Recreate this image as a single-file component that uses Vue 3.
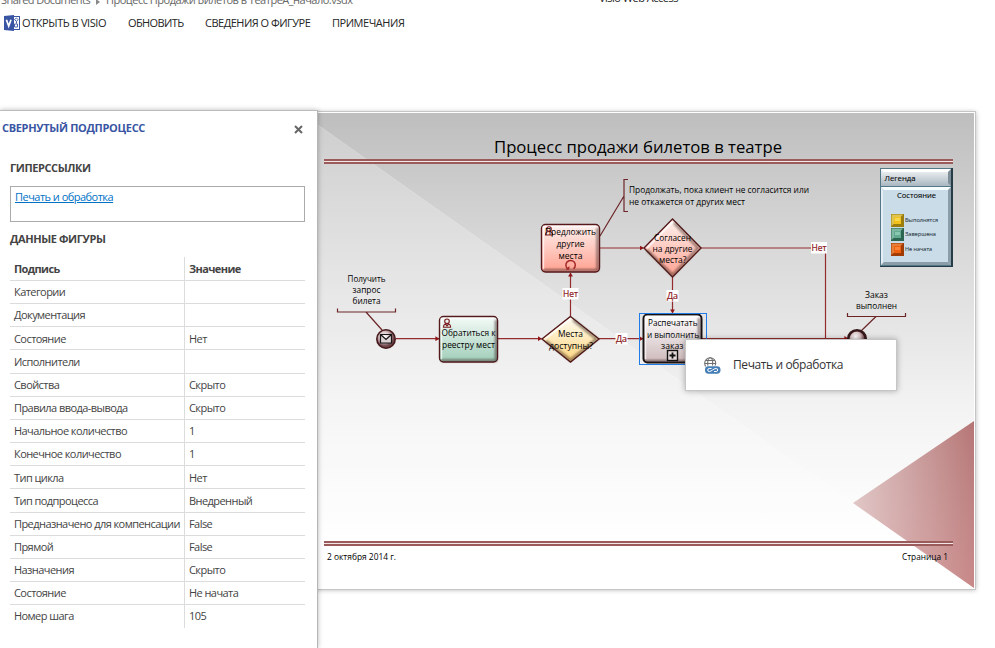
<script setup>
const commands = [
  { text: 'ОТКРЫТЬ В VISIO', cls: 'c1' },
  { text: 'ОБНОВИТЬ', cls: 'c2' },
  { text: 'СВЕДЕНИЯ О ФИГУРЕ', cls: 'c3' },
  { text: 'ПРИМЕЧАНИЯ', cls: 'c4' },
]
const rows = [
  ['Категории', ''],
  ['Документация', ''],
  ['Состояние', 'Нет'],
  ['Исполнители', ''],
  ['Свойства', 'Скрыто'],
  ['Правила ввода-вывода', 'Скрыто'],
  ['Начальное количество', '1'],
  ['Конечное количество', '1'],
  ['Тип цикла', 'Нет'],
  ['Тип подпроцесса', 'Внедренный'],
  ['Предназначено для компенсации', 'False'],
  ['Прямой', 'False'],
  ['Назначения', 'Скрыто'],
  ['Состояние', 'Не начата'],
  ['Номер шага', '105'],
]
// Diagram captions: text, left x, baseline y, width
const labels = [
  ['Получить', 347.5, 281.5, 38],
  ['запрос', 352.5, 293, 28],
  ['билета', 352.5, 304, 28],
  ['Обратиться к', 441.5, 336, 54],
  ['реестру мест', 442, 348, 53],
  ['Предложить', 545, 235, 51],
  ['другие', 556.5, 247, 28],
  ['места', 558.5, 258.5, 24],
  ['Места', 558, 336.5, 25],
  ['доступны?', 549, 348.5, 44],
  ['Согласен', 654, 240.5, 37],
  ['на другие', 652.5, 251.5, 40],
  ['места?', 659, 263, 27.5],
  ['Распечатать', 648, 326, 49.5],
  ['и выполнить', 647, 338, 52],
  ['заказ', 661, 349, 22.5],
  ['Заказ', 865, 298, 23],
  ['выполнен', 856, 309, 41],
  ['Продолжать, пока клиент не согласится или', 629, 193, 180],
  ['не откажется от других мест', 629, 205, 116],
]
const flowLabels = [
  ['Нет', 563, 297, 15],
  ['Да', 616, 342, 11],
  ['Да', 667, 299, 11],
  ['Нет', 811.5, 251, 15],
]
const legend = [
  { text: 'Выполнятся', y: 214, w: 33, fill: '#f2c21b', light: '#fbe36f', dark: '#9b7d10' },
  { text: 'Завершена', y: 228, w: 31, fill: '#63ab90', light: '#a3dcc5', dark: '#2d6650' },
  { text: 'Не начата', y: 243, w: 27, fill: '#f0610f', light: '#ff9a52', dark: '#a03d05' },
]
</script>

<template>
  <div class="screen">
    <header class="top">
      <div class="crumbs">
        <span class="crumb-root">Shared Documents</span>
        <svg class="crumb-arrow" width="4" height="6" viewBox="0 0 4 6"><path d="M0 0L4 3L0 6Z" fill="#888" /></svg>
        <span class="crumb-file">Процесс Продажи Билетов в ТеатреA_начало.vsdx</span>
        <span class="app-title">Visio Web Access</span>
      </div>
      <nav class="commands">
        <svg class="visio" width="16" height="16" viewBox="0 0 16 16">
          <rect x="8.5" y="1.5" width="7" height="13" fill="#fff" stroke="#3955a3" />
          <path d="M0 1L10 0V16L0 15Z" fill="#3955a3" />
          <path d="M2.400 4.800L4.700 11L7 4.800" fill="none" stroke="#fff" stroke-width="1.7" />
          <path d="M10.500 4.500L12.500 3L14 4.500L12.500 6.500ZM12.500 6.500V8.500M10.500 9h3v3h-3z" fill="none" stroke="#3955a3" stroke-width=".9" />
        </svg>
        <span v-for="c in commands" :key="c.text" :class="c.cls">{{ c.text }}</span>
      </nav>
    </header>

    <main class="work">
      <aside class="panel">
        <div class="panel-head">
          <h2>СВЕРНУТЫЙ ПОДПРОЦЕСС</h2>
          <svg width="9" height="9" viewBox="0 0 9 9"><path d="M1 1L8 8M8 1L1 8" stroke="#666" stroke-width="2" /></svg>
        </div>
        <h3 class="h-links">ГИПЕРССЫЛКИ</h3>
        <div class="links"><a>Печать и обработка</a></div>
        <h3 class="h-data">ДАННЫЕ ФИГУРЫ</h3>
        <div class="table">
          <div class="row head"><span>Подпись</span><span>Значение</span></div>
          <div v-for="(r, i) in rows" :key="i" class="row"><span>{{ r[0] }}</span><span>{{ r[1] }}</span></div>
        </div>
      </aside>

      <section class="canvas">
        <svg class="drawing" width="677" height="548" viewBox="318 100 677 548">
          <defs>
            <linearGradient id="bg" x1="0" y1="0" x2="0" y2="1">
              <stop offset="0" stop-color="#bebebe" /><stop offset=".3" stop-color="#dadada" />
              <stop offset=".62" stop-color="#f3f3f3" /><stop offset=".9" stop-color="#fff" />
            </linearGradient>
            <linearGradient id="tri"><stop offset="0" stop-color="#ddc3c3" /><stop offset="1" stop-color="#b67575" /></linearGradient>
            <linearGradient id="triFade" x1="0" y1="0" x2="0" y2="1"><stop offset="0" stop-color="#fff" stop-opacity="0" /><stop offset="1" stop-color="#ffc0c0" stop-opacity=".25" /></linearGradient>
            <linearGradient id="red" x1="0" y1="0" x2="0" y2="1"><stop offset="0" stop-color="#fff2ef" /><stop offset="1" stop-color="#ffa191" /></linearGradient>
            <linearGradient id="green" x1="0" y1="0" x2="0" y2="1"><stop offset="0" stop-color="#f5fbf8" /><stop offset="1" stop-color="#9fcdb8" /></linearGradient>
            <linearGradient id="yellow" x1="0" y1="0" x2="0" y2="1"><stop offset="0" stop-color="#fffdf5" /><stop offset="1" stop-color="#fdd47d" /></linearGradient>
            <linearGradient id="mauve" x1="0" y1="0" x2="0" y2="1"><stop offset="0" stop-color="#fff" /><stop offset="1" stop-color="#cdb9bb" /></linearGradient>
            <linearGradient id="lgHead" x1="0" y1="0" x2="0" y2="1"><stop offset="0" stop-color="#f5f7f8" /><stop offset="1" stop-color="#a9b7c0" /></linearGradient>
            <radialGradient id="ball" cx=".42" cy=".38"><stop offset="0" stop-color="#fff" /><stop offset=".55" stop-color="#d8c3c6" /><stop offset="1" stop-color="#6f474b" /></radialGradient>
            <filter id="soft" x="-10%" y="-10%" width="120%" height="120%"><feGaussianBlur stdDeviation="2.5" /></filter>
            <filter id="edge" x="-20%" y="-20%" width="140%" height="140%"><feGaussianBlur stdDeviation=".8" /></filter>
            <marker id="arr" viewBox="0 0 5 6" refX="4.5" refY="3" markerWidth="4" markerHeight="5" markerUnits="userSpaceOnUse" orient="auto"><path d="M0 0L5 3L0 6Z" fill="#8e1518" /></marker>
          </defs>

          <rect x="300" y="112" width="676" height="478" fill="#000" opacity=".28" filter="url(#soft)" />
          <rect x="300" y="111" width="676" height="479" fill="#c5c5c5" />
          <rect x="300" y="112" width="675" height="477" fill="#fff" />
          <rect x="300" y="113" width="674" height="475" fill="url(#bg)" />
          <path d="M318 125L853 503L730 588H318Z" fill="#fff" opacity=".23" />
          <path d="M318 125L853 503" stroke="#fff" opacity=".18" />
          <path d="M974 421V588L853 503Z" fill="url(#tri)" />
          <path d="M974 421V588L853 503Z" fill="url(#triFade)" />
          <g fill="#9b5b5b">
            <rect x="324" y="159" width="629" height="2" /><rect x="324" y="162" width="629" height="2" />
            <rect x="324" y="541" width="629" height="2" /><rect x="324" y="544" width="629" height="2" />
          </g>
          <g fill="#f2e6e6"><rect x="324" y="161" width="629" height="1" /><rect x="324" y="543" width="629" height="1" /></g>
          <text class="title" x="494" y="153" textLength="288" lengthAdjust="spacingAndGlyphs">Процесс продажи билетов в театре</text>
          <text class="foot" x="327" y="560" textLength="69" lengthAdjust="spacingAndGlyphs">2 октября 2014 г.</text>
          <text class="foot" x="902" y="560" textLength="46" lengthAdjust="spacingAndGlyphs">Страница 1</text>

          <!-- connectors -->
          <g fill="none" stroke="#942c2f" stroke-width="1.2">
            <path d="M396 338.700H439" marker-end="url(#arr)" />
            <path d="M498 338.700H541.500" marker-end="url(#arr)" />
            <path d="M570.500 317V273" marker-end="url(#arr)" />
            <path d="M600 248H643.500" marker-end="url(#arr)" />
            <path d="M672.500 277V313" marker-end="url(#arr)" />
            <path d="M599 338.700H643" marker-end="url(#arr)" />
            <path d="M701 248H822" />
            <path d="M825.500 253V338.500" />
            <path d="M702 338.500H848" marker-end="url(#arr)" />
          </g>
          <g fill="none" stroke="#6c2628" stroke-width="1.2">
            <path d="M337.500 308.500V312H395.500V308.500M366 312L382 330" />
            <path d="M847.500 313V316.500H905.500V313M876 316.500L861 331" />
            <path d="M628 179.500H624V211.500H628M624 196L600 236" />
          </g>

          <!-- tasks -->
          <g stroke="#56191c" stroke-width="1.4">
            <rect x="541.5" y="224.5" width="58" height="47.5" rx="4" fill="url(#red)" />
            <rect x="439.5" y="316.5" width="58" height="45.5" rx="4" fill="url(#green)" />
            <rect x="643.5" y="314.5" width="58" height="48" rx="4" fill="url(#mauve)" stroke="#171112" stroke-width="2" />
          </g>
          <g fill="none" stroke-width="2.2" stroke="#321d1d" opacity=".6" filter="url(#edge)">
            <path d="M543 270H597.500V228" /><path d="M441 360.500H496V320" /><path d="M645 361H699V318" />
          </g>
          <g fill="none" stroke="#fff" stroke-width="1.4" opacity=".7">
            <path d="M543.500 269V226.500H596" /><path d="M441.500 359V318.500H494" /><path d="M645.500 359V316.500H698" />
          </g>

          <!-- gateways -->
          <g stroke="#56191c" stroke-width="1.4">
            <path d="M570.500 316.500L599 339L570.500 362L542 339Z" fill="url(#yellow)" />
            <path d="M672.500 219L701 248L672.500 277L644 248Z" fill="url(#red)" />
          </g>
          <g fill="none" stroke="#37251b" stroke-width="2.5" opacity=".55" filter="url(#edge)">
            <path d="M546 341L570.500 360L596.500 339L573 320" /><path d="M647 250L672.500 275L698 248L674 223" />
          </g>
          <g fill="none" stroke="#fff" stroke-width="1.8" opacity=".75">
            <path d="M545 339L570.500 319" /><path d="M647 248L672.500 222" />
          </g>

          <!-- events -->
          <circle cx="386" cy="339" r="9.2" fill="url(#ball)" stroke="#461a1d" stroke-width="1.6" />
          <path d="M380.500 334.500H391.500V343H380.500ZM380.500 334.500L386 339.500L391.500 334.500" fill="#ddd2d4" stroke="#171717" stroke-width="1.2" />
          <circle cx="857" cy="339" r="8.8" fill="url(#ball)" stroke="#36181b" stroke-width="2.6" />

          <!-- user, loop and subprocess marks -->
          <g fill="none" stroke="#7b1c20" stroke-width="1.1">
            <circle cx="447" cy="321.3" r="2.3" /><path d="M443.500 327.200C443.500 325 445 323.800 447 323.800S450.600 325 450.600 327.200ZM445.400 324.200L447 326L448.600 324.200" />
            <circle cx="549" cy="229" r="2.3" /><path d="M545.500 235C545.500 232.800 547 231.500 549 231.500S552.600 232.800 552.600 235Z" />
          </g>
          <path d="M568 269A4.700 4.700 0 1 1 573.500 268.800" fill="none" stroke="#a42a2a" stroke-width="1.5" />
          <path d="M565.500 269.800H569.400V266Z" fill="#a42a2a" />
          <rect x="667.5" y="350.5" width="10" height="10" fill="#e5d9da" stroke="#111" stroke-width="1.4" />
          <path d="M672.500 352.500V358.500M669.500 355.500H675.500" stroke="#111" stroke-width="1.8" />
          <rect x="639.5" y="313.5" width="67" height="51" fill="none" stroke="#1e7be8" />

          <g class="label">
            <text v-for="l in labels" :key="l[0] + l[2] + l[1]" :x="l[1]" :y="l[2]" :textLength="l[3]" lengthAdjust="spacingAndGlyphs">{{ l[0] }}</text>
          </g>
          <g class="label flow" v-for="l in flowLabels" :key="l[0] + l[1]">
            <rect :x="l[1] - .5" :y="l[2] - 9" :width="l[3] + 1" height="11.5" />
            <text :x="l[1]" :y="l[2]" :textLength="l[3]" lengthAdjust="spacingAndGlyphs">{{ l[0] }}</text>
          </g>

          <!-- legend -->
          <rect x="880" y="168" width="73" height="99" fill="#263d47" />
          <rect x="880" y="168" width="71" height="98" fill="#547888" />
          <rect x="881" y="169" width="70" height="17" fill="url(#lgHead)" />
          <path d="M881 169H951L948 172H884Z" fill="#fff" />
          <path d="M951 169V186L948 183V172Z" fill="#7e8e98" />
          <rect x="881" y="187" width="70" height="78" fill="#c9dce8" />
          <path d="M881 187H951L948 190H884Z" fill="#f7feff" />
          <path d="M951 187V265L948 262V190Z" fill="#8b9da9" />
          <path d="M881 265H951L948 262H884Z" fill="#8b9da9" />
          <path d="M881 187V265L883 262V190Z" fill="#e4eff5" />
          <text class="lg" x="884.5" y="181" textLength="31" lengthAdjust="spacingAndGlyphs">Легенда</text>
          <text class="lg" x="897" y="198" textLength="39" lengthAdjust="spacingAndGlyphs">Состояние</text>
          <g v-for="k in legend" :key="k.text">
            <rect x="891" :y="k.y" width="13" height="13" :fill="k.dark" />
            <path :d="`M891.5 ${k.y + .5}h11.5l-3 3h-5.500v5.500l-3 3z`" :fill="k.light" opacity=".7" />
            <rect x="894" :y="k.y + 3" width="7" height="7" :fill="k.fill" />
            <rect x="895" :y="k.y + 4" width="5" height="3" :fill="k.light" opacity=".6" />
            <text class="lg-item" x="905" :y="k.y + 8.3" :textLength="k.w" lengthAdjust="spacingAndGlyphs">{{ k.text }}</text>
          </g>
        </svg>

        <div class="menu">
          <svg width="17" height="17" viewBox="0 0 17 17">
            <g fill="none" stroke="#6e6e6e" stroke-width="1.1">
              <circle cx="6.2" cy="6.2" r="5.5" /><ellipse cx="6.2" cy="6.2" rx="2.5" ry="5.5" /><path d="M.7 6.500H11.700M1.700 3.500H10.700" />
            </g>
            <rect x=".5" y="8.500" width="16.500" height="8.500" rx="4" fill="#fff" />
            <rect x="1" y="9.300" width="15.500" height="7.400" rx="3.400" fill="#467fb8" />
            <path d="M7.500 11.500H5.200A1.500 1.500 0 0 0 5.200 14.500C8 14.500 9 11.500 12.200 11.500A1.500 1.500 0 0 1 12.200 14.500H10" fill="none" stroke="#fff" stroke-width="1" />
          </svg>
          <span>Печать и обработка</span>
        </div>
      </section>
    </main>
  </div>
</template>

<style>
body { margin: 0; background: #fff; overflow: hidden; }
</style>
<style scoped>
.screen { width: 995px; height: 648px; overflow: hidden; display: flex; flex-direction: column; background: #fff; font-family: "Open Sans", "Noto Sans", sans-serif; color: #444; }
.screen * { box-sizing: border-box; }
.top { height: 100px; flex: none; }
.crumbs { height: 13px; display: flex; align-items: flex-start; padding-left: 1px; font-size: 11px; line-height: 15px; color: #666; white-space: nowrap; letter-spacing: -.5px; }
.crumbs > span { margin-top: -8px; height: 16px; }
.crumb-root { width: 95px; letter-spacing: -.56px; }
.crumb-arrow { margin: -1px 6px 0 0; }
.crumb-file { width: 493px; }
.crumbs .app-title { color: #222; margin-top: -10px; }
.commands { display: flex; align-items: center; height: 20px; padding-left: 4px; font-size: 11px; line-height: 16px; color: #262626; white-space: nowrap; }
.visio { flex: none; margin-right: 2px; }
.c1 { width: 106px; letter-spacing: -.42px; }
.c2 { width: 77px; letter-spacing: -.6px; }
.c3 { width: 127px; letter-spacing: -.5px; }
.c4 { letter-spacing: -.46px; }
.work { flex: 1; display: flex; min-height: 0; }
.panel { width: 318px; flex: none; margin-top: 10px; border-top: 1px solid #bcbcbc; border-right: 1px solid #b5b5b5; background: #fff; box-shadow: 0 0 5px rgba(0, 0, 0, .28); padding-left: 10px; z-index: 1; }
.panel-head { display: flex; justify-content: space-between; align-items: center; height: 36px; margin-left: -8px; padding-right: 14px; }
h2, h3 { margin: 0; font-weight: 700; font-size: 11px; line-height: 16px; white-space: nowrap; }
h2 { color: #3955a3; font-size: 11px; margin-top: -2px; letter-spacing: -.32px; }
h3 { color: #444; letter-spacing: -.4px; }
.h-links { margin-top: 13px; }
.links { width: 295px; height: 36px; margin-top: 10px; border: 1px solid #ababab; padding: 2px 4px; font-size: 11px; line-height: 15px; letter-spacing: -.52px; }
.links a { color: #0072c6; text-decoration: underline; }
.h-data { margin-top: 9px; }
.table { width: 295px; margin-top: 10px; font-size: 11px; line-height: 15px; letter-spacing: -.56px; }
.row { display: grid; grid-template-columns: 175px 120px; height: 23.16px; border-bottom: 1px solid #dcdcdc; }
.row:last-child { border-bottom: 0; }
.row span { padding: 3.27px 0 0 4px; white-space: nowrap; }
.row span:first-child { border-right: 1px solid #dcdcdc; }
.row.head { font-weight: 700; letter-spacing: -.6px; height: 24px; }
.row.head span { padding-top: 4px; }
.canvas { position: relative; flex: 1; }
.drawing { display: block; }
text { font-family: "Open Sans", sans-serif; fill: #000; }
.title { font-size: 17px; }
.foot { font-size: 9px; }
.label text { font-size: 9.3px; }
.flow rect { fill: #fff; }
.flow text { fill: #8b1518; stroke: #8b1518; stroke-width: .2px; }
.lg { font-size: 8px; stroke: #000; stroke-width: .1px; }
.lg-item { font-size: 5.5px; fill: #33434c; stroke: #33434c; stroke-width: .1px; }
.menu { position: absolute; left: 367px; top: 239px; width: 212px; height: 52px; border: 1px solid #c6c6c6; background: #fff; box-shadow: 0 0 6px rgba(0, 0, 0, .3); display: flex; align-items: center; padding-left: 18px; gap: 12px; font-size: 12px; letter-spacing: -.4px; color: #333; white-space: nowrap; }
.menu span { margin-top: -2px; }
</style>
